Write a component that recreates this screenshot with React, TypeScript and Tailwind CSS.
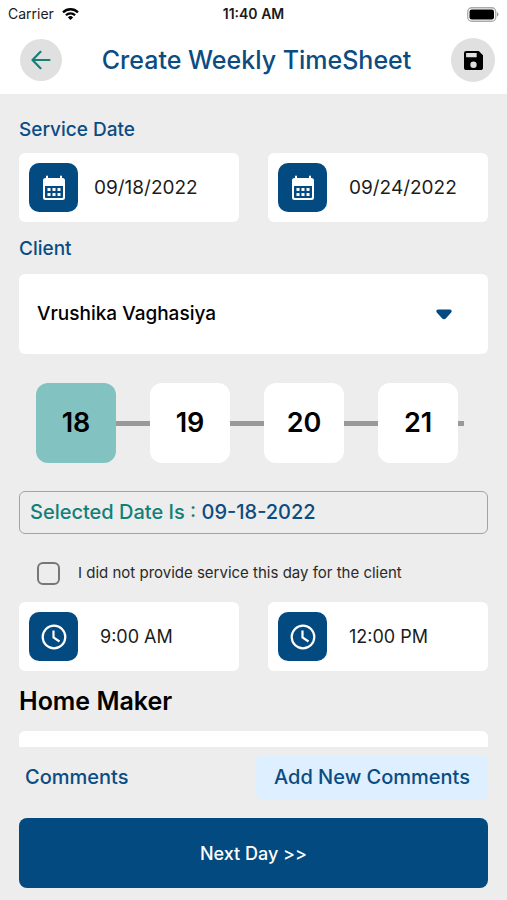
import { useState } from "react";
import type { ReactNode } from "react";

const days = [18, 19, 20, 21];

function CalendarIcon() {
  return (
    <svg viewBox="0 0 24 26" className="h-[26px] w-6" fill="#fff" aria-hidden="true">
      <path
        fillRule="evenodd"
        d="M5 0.5a1 1 0 0 1 1 1V3h12V1.500a1 1 0 0 1 2 0V3h.5A2.500 2.500 0 0 1 23 5.500v17a2.500 2.500 0 0 1-2.500 2.500h-17A2.500 2.500 0 0 1 1 22.500v-17A2.500 2.500 0 0 1 3.500 3H4V1.500a1 1 0 0 1 1-1zM3 11v11a1 1 0 0 0 1 1h16a1 1 0 0 0 1-1V11z"
      />
      <path d="M5.500 13h3v3h-3zM10.500 13h3v3h-3zM15.500 13h3v3h-3zM5.500 18h3v3h-3zM10.500 18h3v3h-3zM15.500 18h3v3h-3z" />
    </svg>
  );
}

function ClockIcon() {
  return (
    <svg
      viewBox="0 0 26 26"
      className="size-[26px]"
      fill="none"
      stroke="#fff"
      strokeWidth="2.2"
      aria-hidden="true"
    >
      <circle cx="13" cy="13" r="11.300" />
      <path d="M12.500 6.500v7l6 4" />
    </svg>
  );
}

function PickerField({
  label,
  value,
  icon,
  textClass,
}: {
  label: string;
  value: string;
  icon: ReactNode;
  textClass: string;
}) {
  return (
    <label className="flex h-[69px] items-center rounded-md bg-white px-[10px]">
      <span className="flex size-[49px] shrink-0 items-center justify-center rounded-[10px] bg-[#034a80]">
        {icon}
      </span>
      <input
        type="text"
        readOnly
        aria-label={label}
        defaultValue={value}
        className={`${textClass} w-full min-w-0 bg-transparent leading-6 text-[#1c1c1c] outline-none`}
      />
    </label>
  );
}

function StatusBar() {
  return (
    <div className="grid h-7 grid-cols-3 items-center px-2 text-[14px] leading-5 text-[#1a1a1a]">
      <div className="flex items-center gap-2">
        <span>Carrier</span>
        <svg viewBox="0 0 17 12" className="h-3 w-[17px]" fill="none" stroke="#000" strokeWidth="2.3" aria-hidden="true">
          <path d="M1 4.300a10.800 10.800 0 0 1 15 0" />
          <path d="M3.900 7.300a6.600 6.600 0 0 1 9.200 0" />
          <path d="M8.500 12 5.900 9.400a3.700 3.700 0 0 1 5.200 0z" fill="#000" stroke="none" />
        </svg>
      </div>
      <span className="text-center font-semibold">11:40 AM</span>
      <svg viewBox="0 0 32 15" className="h-[15px] w-8 justify-self-end" aria-hidden="true">
        <rect x="0.750" y="0.750" width="28" height="13.500" rx="4" fill="#fff" stroke="#aaa" strokeWidth="1.300" />
        <rect x="2.500" y="2.500" width="24.500" height="10" rx="2.300" fill="#000" />
        <path d="M30 5.300a2.400 2.400 0 0 1 0 4.400z" fill="#999" />
      </svg>
    </div>
  );
}

export default function App() {
  const [selected, setSelected] = useState(18);

  return (
    <div className="flex h-screen flex-col bg-[#ededed] font-['Inter','Noto_Sans',sans-serif]">
      <header className="h-[94px] shrink-0 bg-white">
        <StatusBar />
        <div className="flex items-center justify-between pr-3 pl-5 pt-[10px]">
          <button
            type="button"
            aria-label="Back"
            className="flex size-[42px] items-center justify-center rounded-full bg-[#e0e0e0]"
          >
            <svg viewBox="0 0 20 20" className="size-5" fill="none" stroke="#148078" strokeWidth="2.200" strokeLinecap="round" strokeLinejoin="round" aria-hidden="true">
              <path d="M18.500 10H1.500M9.500 1.800 1.500 10l8 8.200" />
            </svg>
          </button>
          <h1 className="text-[25px] leading-8 font-medium text-[#0b4c82]">Create Weekly TimeSheet</h1>
          <button
            type="button"
            aria-label="Save"
            className="flex size-11 items-center justify-center rounded-full bg-[#e0e0e0]"
          >
            <svg viewBox="3 3 18 18" className="size-[19px]" fill="#000" aria-hidden="true">
              <path d="M17 3H5a2 2 0 0 0-2 2v14c0 1.100.9 2 2 2h14c1.100 0 2-.9 2-2V7l-4-4zm-5 16a3 3 0 1 1 0-6 3 3 0 0 1 0 6zm3-10H5V5h10v4z" />
            </svg>
          </button>
        </div>
      </header>

      <main className="min-h-0 flex-1 overflow-hidden px-[19px] pt-6">
        <h2 className="text-[19px] leading-6 font-medium text-[#0b4c82]">Service Date</h2>
        <div className="mt-[11px] grid grid-cols-2 gap-[29px]">
          <PickerField label="Start date" value="09/18/2022" icon={<CalendarIcon />} textClass="pl-4 text-[19px]" />
          <PickerField label="End date" value="09/24/2022" icon={<CalendarIcon />} textClass="pl-[22px] text-[19px]" />
        </div>

        <label htmlFor="client" className="mt-[15px] block text-[19px] leading-6 font-medium text-[#0b4c82]">
          Client
        </label>
        <div className="mt-[13px] grid items-center">
          <select
            id="client"
            className="col-start-1 row-start-1 h-20 w-full appearance-none rounded-md bg-white pr-16 pl-[18px] text-[19px] font-medium text-black outline-none"
          >
            <option>Vrushika Vaghasiya</option>
          </select>
          <svg viewBox="0 0 16 11" className="pointer-events-none col-start-1 row-start-1 mr-9 h-[11px] w-4 justify-self-end" fill="#034a80" aria-hidden="true">
            <path d="M2 .5h12c1.500 0 2.200 1.800 1.200 2.900L10 9.300c-1.200 1.300-2.800 1.300-4 0L.8 3.400C-.2 2.300.5.5 2 .5z" />
          </svg>
        </div>

        <div className="mt-[29px] mr-6 ml-[17px] flex overflow-hidden">
          {days.map((day) => (
            <div key={day} className="flex shrink-0 items-center">
              <button
                type="button"
                aria-pressed={day === selected}
                onClick={() => setSelected(day)}
                className={`${day === selected ? "bg-[#82c3c2]" : "bg-white"} size-20 rounded-xl text-[27px] font-semibold text-black`}
              >
                {day}
              </button>
              <span className="h-[5px] w-[34px] bg-[#999]" />
            </div>
          ))}
        </div>

        <p className="mt-7 rounded-md border border-[#a3a3a3] px-[10px] py-2 text-[20px] leading-[25px] font-medium text-[#0b4c82]">
          <span className="text-[#12807a]">Selected Date Is : </span>09-{selected}-2022
        </p>

        <label className="mt-[27px] ml-[18px] flex items-center gap-[18px] text-[15px] leading-6 text-[#2a2a2a]">
          <input
            type="checkbox"
            className="size-[23px] appearance-none rounded-md border-2 border-[#777] checked:bg-[#034a80]"
          />
          I did not provide service this day for the client
        </label>

        <div className="mt-[17px] grid grid-cols-2 gap-[29px]">
          <PickerField label="Start time" value="9:00 AM" icon={<ClockIcon />} textClass="pl-[22px] text-[18px]" />
          <PickerField label="End time" value="12:00 PM" icon={<ClockIcon />} textClass="pl-[22px] text-[18px]" />
        </div>

        <h2 className="mt-[14px] text-[25px] leading-8 font-semibold text-black">Home Maker</h2>
        <div className="mt-[14px] h-20 rounded-md bg-white" />
      </main>

      <footer className="shrink-0 px-[19px] pt-2 pb-3">
        <div className="flex items-center justify-between text-[20px] leading-6 font-medium text-[#0b4c82]">
          <h2 className="pl-[6px]">Comments</h2>
          <button type="button" className="rounded-md bg-[#deefff] px-[18px] py-[10px]">
            Add New Comments
          </button>
        </div>
        <button
          type="button"
          className="mt-[19px] h-[70px] w-full rounded-lg bg-[#034a80] text-[18px] font-medium text-white"
        >
          Next Day &gt;&gt;
        </button>
      </footer>
    </div>
  );
}
